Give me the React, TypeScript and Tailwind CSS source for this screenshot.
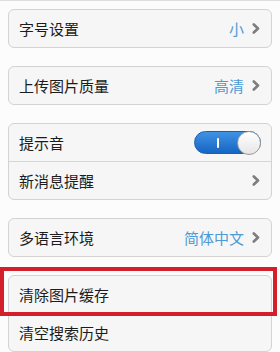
import React from "react";

const Chevron = () => (
  <svg width="8" height="11" viewBox="0 0 8 11" className="shrink-0">
    <polyline points="1.8,1.5 6,5.5 1.8,9.5" fill="none" stroke="#7d7d7d" strokeWidth="2.6" strokeLinecap="round" strokeLinejoin="round" />
  </svg>
);

const Row = ({ label, value, chevron = true, children }: { label: string; value?: string; chevron?: boolean; children?: React.ReactNode }) => (
  <div className="h-[37px] flex items-center pl-[10px] pr-[11px]">
    <span className="text-[15px] text-[#1c1c1c] leading-none flex-1">{label}</span>
    {value && <span className="text-[15px] text-[#4d9ad6] leading-none mr-[8px]">{value}</span>}
    {children}
    {chevron && <Chevron />}
  </div>
);

const Card = ({ children }: { children: React.ReactNode }) => (
  <div className="rounded-[6px] border border-[#d3d3d3] bg-[#f6f6f6] flex flex-col">{children}</div>
);

const Divider = () => <div className="h-px bg-[#d6d6d6]" />;

const Toggle = () => (
  <div className="relative w-[67px] h-[23px] rounded-full bg-gradient-to-b from-[#3f93e2] to-[#1565c4] border border-[#1a5fb0] mr-[-1px]">
    <div className="absolute left-[22px] top-[6px] w-[2px] h-[10px] bg-white rounded" />
    <div className="absolute right-[-1px] top-[-1px] w-[24px] h-[24px] rounded-full bg-gradient-to-b from-[#ffffff] to-[#e6e6e6] border border-[#9a9a9a]" />
  </div>
);

export default function App() {
  return (
    <div
      className="relative w-[280px] h-[352px] overflow-hidden bg-[#fcfcfc] border-t border-[#dedede]"
      style={{ fontFamily: '"Noto Sans CJK SC", "Noto Sans", sans-serif' }}
    >
      <div className="flex flex-col gap-[18px] pt-[8px] pl-[8px] pr-[8px]">
        <Card>
          <Row label="字号设置" value="小" />
        </Card>
        <Card>
          <Row label="上传图片质量" value="高清" />
        </Card>
        <Card>
          <Row label="提示音" chevron={false}>
            <Toggle />
          </Row>
          <Divider />
          <Row label="新消息提醒" />
        </Card>
        <Card>
          <Row label="多语言环境" value="简体中文" />
        </Card>
        <Card>
          <Row label="清除图片缓存" chevron={false} />
          <Divider />
          <Row label="清空搜索历史" chevron={false} />
        </Card>
      </div>
      <div className="absolute left-0 top-[266px] w-[277px] h-[49px] border-[4px] border-[#d21f2b]" />
    </div>
  );
}
